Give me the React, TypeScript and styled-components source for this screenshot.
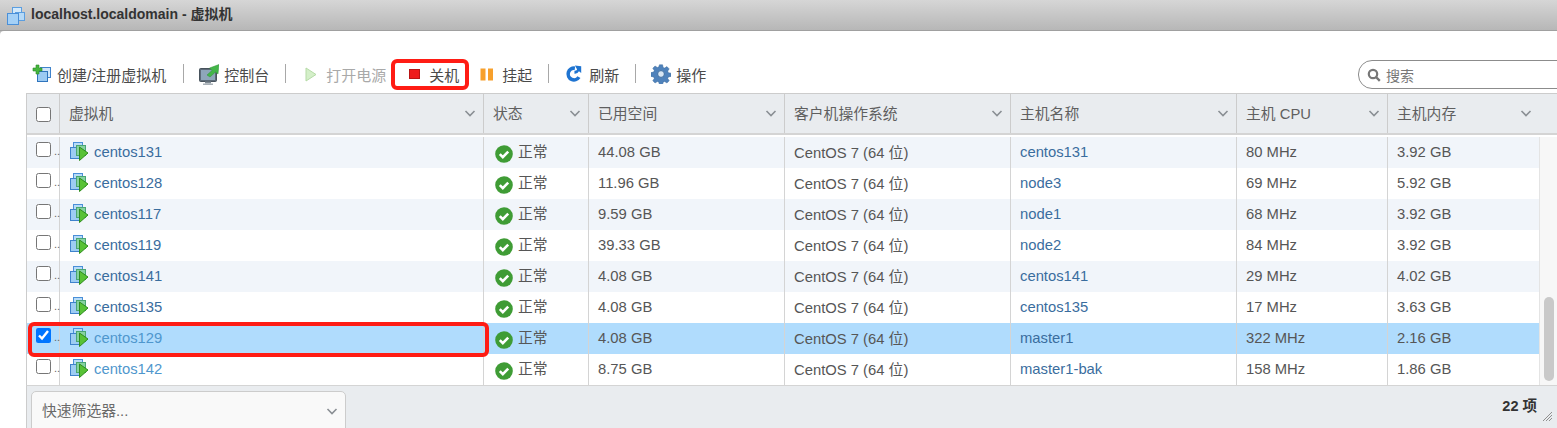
import { createGlobalStyle, styled } from "styled-components";

const COLUMNS = "32px 424px 105px 196px 226px 226px 151px 152px";

const rows = [
  { name: "centos131", used: "44.08 GB", host: "centos131", cpu: "80 MHz", mem: "3.92 GB" },
  { name: "centos128", used: "11.96 GB", host: "node3", cpu: "69 MHz", mem: "5.92 GB" },
  { name: "centos117", used: "9.59 GB", host: "node1", cpu: "68 MHz", mem: "3.92 GB" },
  { name: "centos119", used: "39.33 GB", host: "node2", cpu: "84 MHz", mem: "3.92 GB" },
  { name: "centos141", used: "4.08 GB", host: "centos141", cpu: "29 MHz", mem: "4.02 GB" },
  { name: "centos135", used: "4.08 GB", host: "centos135", cpu: "17 MHz", mem: "3.63 GB" },
  { name: "centos129", used: "4.08 GB", host: "master1", cpu: "322 MHz", mem: "2.16 GB", selected: true, light: true },
  { name: "centos142", used: "8.75 GB", host: "master1-bak", cpu: "158 MHz", mem: "1.86 GB", light: true },
];

const headers = ["虚拟机", "状态", "已用空间", "客户机操作系统", "主机名称", "主机 CPU", "主机内存"];

const Chevron = () => (
  <svg width="12" height="7" viewBox="0 0 12 7">
    <path d="M1.5 1 L6 5.5 L10.5 1" fill="none" stroke="#8a8f94" strokeWidth="1.6" />
  </svg>
);

const StackIcon = () => (
  <svg width="18" height="18" viewBox="0 0 18 18">
    <rect x="5.5" y="0.5" width="9" height="9" fill="#d3e9fb" stroke="#5b9ee0" />
    <rect x="8.5" y="5.5" width="9" height="8" fill="#b5d9f7" stroke="#5b9ee0" />
    <rect x="0.5" y="6.5" width="11" height="11" fill="#a4d0f6" stroke="#4a8fd8" />
  </svg>
);

const CreateIcon = () => (
  <svg width="20" height="20" viewBox="0 0 20 20">
    <rect x="8.5" y="3.5" width="10" height="10" fill="#cfe6fa" stroke="#3f83cc" />
    <rect x="5.5" y="7.5" width="10" height="10" fill="#9ccaf2" stroke="#2f74bd" />
    <path d="M4 1h3v3h3v3H7v3H4V7H1V4h3z" fill="#45b53c" stroke="#2c8a2a" strokeWidth="0.6" />
  </svg>
);

const ConsoleIcon = () => (
  <svg width="20" height="21" viewBox="0 0 20 21">
    <rect x="0.5" y="4.5" width="17" height="13" rx="1" fill="#5d6b78" stroke="#47525c" />
    <rect x="2" y="6" width="14" height="10" fill="#8ea6ba" />
    <rect x="6" y="17.5" width="6" height="2" fill="#7f8a94" />
    <rect x="4" y="19.5" width="10" height="1.5" fill="#a9b1b8" />
    <path d="M8 11 L13 6.5 L10.5 4 L20 0.5 L19 10 L16.5 8 L11 13z" fill="#43b649" stroke="#2f9337" strokeWidth="0.5" />
  </svg>
);

const PlayIcon = () => (
  <svg width="12" height="15" viewBox="0 0 12 15">
    <path d="M1 1 L11 7.5 L1 14z" fill="#d4efc9" stroke="#b5dba6" />
  </svg>
);

const StopIcon = () => (
  <svg width="11" height="10" viewBox="0 0 11 10">
    <rect x="0.5" y="0.5" width="10" height="9" fill="#ee1c1c" stroke="#b91414" />
  </svg>
);

const PauseIcon = () => (
  <svg width="14" height="13" viewBox="0 0 14 13">
    <rect x="0.5" y="0.5" width="5" height="12" fill="#f7a02c" />
    <rect x="8" y="0.5" width="5" height="12" fill="#f7a02c" />
  </svg>
);

const RefreshIcon = () => (
  <svg width="18" height="18" viewBox="0 0 20 20">
    <path d="M15.5 13.5 A6.5 6.5 0 1 1 11 3.6" fill="none" stroke="#1f74d1" strokeWidth="4" />
    <path d="M11 0.5 L18 1.5 L18 9 L15.5 7 Q14 10 10.5 9.6 L10.5 6.4 Q13 6.4 13.5 5 z" fill="#1f74d1" />
  </svg>
);

const GearIcon = () => (
  <svg width="20" height="20" viewBox="0 0 20 20">
    <path
      d="M8.4 0.8h3.2l.5 2.6 1.6.7 2.2-1.5 2.3 2.3-1.5 2.2.7 1.6 2.6.5v3.2l-2.6.5-.7 1.6 1.5 2.2-2.3 2.3-2.2-1.5-1.6.7-.5 2.6H8.4l-.5-2.6-1.6-.7-2.2 1.5-2.3-2.3 1.5-2.2-.7-1.6-2.6-.5V8.6l2.6-.5.7-1.6-1.5-2.2 2.3-2.3 2.2 1.5 1.6-.7z"
      fill="#4f82bb"
      stroke="#3c6c9f"
      strokeWidth="0.5"
    />
    <circle cx="10" cy="10" r="3.4" fill="#d8e6f3" stroke="#3c6c9f" />
  </svg>
);

const SearchIcon = () => (
  <svg width="14" height="14" viewBox="0 0 14 14">
    <circle cx="6" cy="6" r="4.2" fill="none" stroke="#777" strokeWidth="2.2" />
    <path d="M9 9 L12.8 12.8" stroke="#777" strokeWidth="2.4" />
  </svg>
);

const VmIcon = () => (
  <svg width="19" height="19" viewBox="0 0 19 19">
    <rect x="3.5" y="0.5" width="9" height="8" fill="#b8dcf8" stroke="#4a8fd8" />
    <rect x="0.5" y="5.5" width="10" height="11" fill="#9dccf3" stroke="#3f83cc" />
    <rect x="6.5" y="3.5" width="9" height="10" fill="#86d2a0" stroke="#4aa673" />
    <path d="M9.5 5 L18 11 L9.5 18.5z" fill="#58c236" stroke="#2f8d1f" />
  </svg>
);

const OkIcon = () => (
  <svg width="18" height="18" viewBox="0 0 18 18">
    <circle cx="9" cy="9" r="8.8" fill="#3f9c35" />
    <path d="M4.8 9.2 L7.8 12.2 L13.2 6.6" fill="none" stroke="#fff" strokeWidth="2.6" />
  </svg>
);

export default function App() {
  return (
    <>
      <GlobalStyle />
      <Page>
        <TitleBar>
          <StackIcon />
          <Title>localhost.localdomain - 虚拟机</Title>
        </TitleBar>
        <Panel>
          <Toolbar>
            <ToolButton>
              <IconSlot><CreateIcon /></IconSlot>创建/注册虚拟机
            </ToolButton>
            <ToolSep />
            <ToolButton>
              <IconSlot><ConsoleIcon /></IconSlot>控制台
            </ToolButton>
            <ToolSep />
            <ToolButton $disabled>
              <IconSlot><PlayIcon /></IconSlot>打开电源
            </ToolButton>
            <ToolButton>
              <IconSlot><StopIcon /></IconSlot>关机
            </ToolButton>
            <ToolButton>
              <IconSlot><PauseIcon /></IconSlot>挂起
            </ToolButton>
            <ToolSep />
            <ToolButton>
              <IconSlot><RefreshIcon /></IconSlot>刷新
            </ToolButton>
            <ToolSep />
            <ToolButton>
              <IconSlot><GearIcon /></IconSlot>操作
            </ToolButton>
            <SearchBox>
              <SearchIcon />
              <span>搜索</span>
            </SearchBox>
          </Toolbar>

          <Grid>
            <HeaderRow>
              <CheckCell>
                <Check type="checkbox" readOnly />
              </CheckCell>
              {headers.map((h) => (
                <HeaderCell key={h}>
                  {h}
                  <Chevron />
                </HeaderCell>
              ))}
            </HeaderRow>
            <Body>
              <Rows>
                {rows.map((r, i) => (
                  <Row key={r.name} $odd={i % 2 === 0} $selected={!!r.selected}>
                    <CheckCell>
                      <Check type="checkbox" readOnly checked={!!r.selected} />
                      <Dots>..</Dots>
                    </CheckCell>
                    <NameCell>
                      <VmIcon />
                      <Link $light={r.light}>{r.name}</Link>
                    </NameCell>
                    <StatusCell>
                      <StatusIcon><OkIcon /></StatusIcon>正常
                    </StatusCell>
                    <Cell>{r.used}</Cell>
                    <Cell>CentOS 7 (64 位)</Cell>
                    <Cell><Link>{r.host}</Link></Cell>
                    <Cell>{r.cpu}</Cell>
                    <Cell>{r.mem}</Cell>
                  </Row>
                ))}
              </Rows>
              <ScrollTrack>
                <ScrollThumb />
              </ScrollTrack>
            </Body>
          </Grid>

          <Footer>
            <QuickFilter>
              快速筛选器...
              <Chevron />
            </QuickFilter>
            <Count>22 项</Count>
            <Grip viewBox="0 0 10 10" width="10" height="10">
              <path d="M1 10 L10 1 M4 10 L10 4 M7 10 L10 7" stroke="#8f8f8f" strokeWidth="1" />
            </Grip>
          </Footer>

          <ShutdownMark />
          <RowMark />
        </Panel>
      </Page>
    </>
  );
}

const GlobalStyle = createGlobalStyle`
  html, body {
    margin: 0;
    padding: 0;
    background: #fff;
  }
  body {
    font-family: "Liberation Sans", "Noto Sans CJK SC", sans-serif;
    font-size: 14.8px;
    color: #565656;
  }
`;

const Page = styled.div`
  width: 1557px;
  height: 428px;
  overflow: hidden;
  display: flex;
  flex-direction: column;
  background: #b9b9b9;
`;

const TitleBar = styled.div`
  height: 31px;
  flex: none;
  display: flex;
  align-items: flex-start;
  gap: 6px;
  padding: 6px 0 0 7px;
  box-sizing: border-box;
  background: linear-gradient(#d6d6d6, #b7b7b7);
  border-bottom: 1px solid #a0a0a0;

  svg {
    margin-top: 1px;
  }
`;

const Title = styled.div`
  font-size: 14px;
  line-height: 16px;
  font-weight: 700;
  color: #333;
`;

const Panel = styled.div`
  position: relative;
  flex: 1;
  min-height: 0;
  background: #fff;
  border-top-left-radius: 4px;
  display: flex;
  flex-direction: column;
  padding-left: 26px;
`;

const Toolbar = styled.div`
  height: 62px;
  flex: none;
  display: flex;
  align-items: flex-end;
  padding: 0 0 7px 6px;
  box-sizing: border-box;
`;

const ToolButton = styled.div<{ $disabled?: boolean }>`
  display: flex;
  align-items: center;
  gap: 5px;
  height: 24px;
  font-size: 15px;
  color: ${(p) => (p.$disabled ? "#a9a9a9" : "#4a4a4a")};

  &:first-child {
    padding-right: 1px;
  }

  & + & {
    margin-left: 18px;
  }
`;

const IconSlot = styled.span`
  width: 20px;
  height: 20px;
  display: flex;
  align-items: center;
  justify-content: center;
`;

const ToolSep = styled.span`
  width: 1px;
  height: 19px;
  background: #a8a8a8;
  margin: 0 15px 3px 16px;
`;

const SearchBox = styled.div`
  margin-left: auto;
  margin-right: -14px;
  margin-bottom: -3px;
  width: 213px;
  height: 29px;
  box-sizing: border-box;
  border: 1px solid #8c8c8c;
  border-radius: 14px;
  display: flex;
  align-items: center;
  gap: 5px;
  padding-left: 8px;
  font-size: 14px;
  color: #777;
`;

const Grid = styled.div`
  flex: none;
  border-left: 1px solid #ccc;
  display: flex;
  flex-direction: column;
`;

const HeaderRow = styled.div`
  height: 42px;
  box-sizing: border-box;
  display: grid;
  grid-template-columns: ${COLUMNS};
  background: #e9ecef;
  border-top: 1px solid #ccc;
  border-bottom: 2px solid #d4d4d4;
`;

const HeaderCell = styled.div`
  display: flex;
  align-items: center;
  justify-content: space-between;
  padding: 0 7px 2px 9px;
  border-left: 1px solid #ccc;
  color: #5f5f5f;

  svg {
    margin-top: 2px;
  }
`;

const Body = styled.div`
  height: 250px;
  display: flex;
  overflow: hidden;
  padding-top: 2px;
  box-sizing: border-box;
`;

const Rows = styled.div`
  width: 1512px;
  flex: none;
  display: flex;
  flex-direction: column;
`;

const Row = styled.div<{ $odd: boolean; $selected: boolean }>`
  height: 31px;
  flex: none;
  display: grid;
  grid-template-columns: ${COLUMNS};
  background: ${(p) => (p.$selected ? "#b0dcfd" : p.$odd ? "#f1f5fa" : "#fff")};
`;

const Cell = styled.div`
  display: flex;
  align-items: center;
  padding: 0 0 2px 9px;
  border-left: 1px solid #d4d4d4;
  white-space: nowrap;
  overflow: hidden;
`;

const NameCell = styled(Cell)`
  gap: 5px;
  padding-left: 10px;
`;

const StatusCell = styled(Cell)`
  padding-bottom: 4px;
`;

const CheckCell = styled.div`
  position: relative;
  display: flex;
  align-items: flex-start;
  padding: 5px 0 0 9px;
`;

const Check = styled.input`
  width: 15px;
  height: 15px;
  margin: 0;
  ${HeaderRow} & {
    margin-top: 8px;
  }
`;

const Dots = styled.span`
  position: absolute;
  left: 27px;
  top: 8px;
  font-size: 11px;
  color: #666;
`;

const Link = styled.span<{ $light?: boolean }>`
  color: ${(p) => (p.$light ? "#4f97cd" : "#3a6d9e")};
`;

const StatusIcon = styled.span`
  display: flex;
  margin: 7px 5px 0 2px;
`;

const ScrollTrack = styled.div`
  flex: 1;
  background: #f7f7f7;
  border-left: 1px solid #e4e4e4;
  position: relative;
`;

const ScrollThumb = styled.div`
  position: absolute;
  left: 4px;
  right: 3px;
  bottom: 4px;
  height: 84px;
  border-radius: 6px;
  background: #c9c9c9;
`;

const Footer = styled.div`
  flex: 1;
  min-height: 0;
  position: relative;
  display: flex;
  align-items: flex-start;
  justify-content: space-between;
  background: #e9ecef;
  border-left: 1px solid #ccc;
  border-top: 1px solid #d4d4d4;
  padding: 5px 20px 0 4px;
`;

const QuickFilter = styled.div`
  width: 315px;
  height: 44px;
  flex: none;
  box-sizing: border-box;
  background: #f9f9f9;
  border: 1px solid #ccc;
  border-radius: 5px;
  display: flex;
  align-items: flex-start;
  justify-content: space-between;
  padding: 7px 7px 0 10px;
  color: #6a6a6a;

  svg {
    margin-top: 9px;
  }
`;

const Count = styled.div`
  font-weight: 700;
  color: #333;
  font-size: 14.5px;
  margin-top: 3px;
`;

const Grip = styled.svg`
  position: absolute;
  right: 5px;
  bottom: 7px;
`;

const ShutdownMark = styled.div`
  position: absolute;
  left: 391px;
  top: 28px;
  width: 78px;
  height: 31px;
  box-sizing: border-box;
  border: 4px solid #ff1c14;
  border-radius: 6px;
  pointer-events: none;
`;

const RowMark = styled.div`
  position: absolute;
  left: 28px;
  top: 291px;
  width: 461px;
  height: 35px;
  box-sizing: border-box;
  border: 4px solid #ff1c14;
  border-radius: 6px;
  pointer-events: none;
`;
